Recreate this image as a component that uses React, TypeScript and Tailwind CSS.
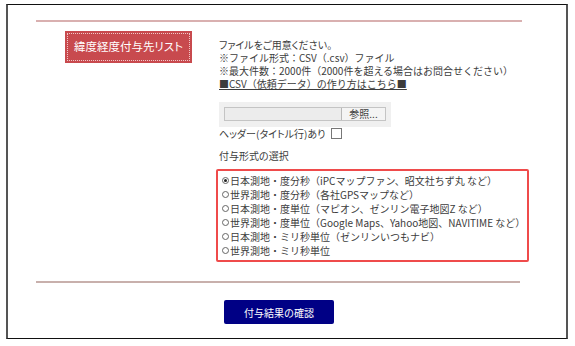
const options = [
  "日本測地・度分秒（iPCマップファン、昭文社ちず丸 など）",
  "世界測地・度分秒（各社GPSマップなど）",
  "日本測地・度単位（マピオン、ゼンリン電子地図Z など）",
  "世界測地・度単位（Google Maps、Yahoo地図、NAVITIME など）",
  "日本測地・ミリ秒単位（ゼンリンいつもナビ）",
  "世界測地・ミリ秒単位",
];

function Radio({ checked }: { checked?: boolean }) {
  return (
    <span className="w-[7px] h-[7px] rounded-full border border-[#666] bg-white flex items-center justify-center shrink-0">
      {checked && <span className="w-[3px] h-[3px] rounded-full bg-[#222]" />}
    </span>
  );
}

export default function App() {
  return (
    <div className="w-[575px] h-[346px] bg-white pt-[4px] pl-[6px] text-[#3c3c3c] font-['Noto_Sans_CJK_JP','Noto_Sans',sans-serif]">
      <div className="w-[562px] h-[335px] border-y border-x-2 border-y-[#111] border-x-[#555] flex flex-col">
        <div className="mt-[15px] ml-[28px] w-[486px] h-[2px] bg-[#d9b0b0]" />

        <div className="flex mt-[9px]">
          <div className="ml-[57px] w-[127px] h-[32px] bg-[#c84a4e] p-[2px] shrink-0">
            <div className="w-full h-full border border-dotted border-[#f0c8c8] flex items-center justify-center text-white text-[11.5px] [font-feature-settings:'palt']">
              緯度経度付与先リスト
            </div>
          </div>

          <div className="ml-[27px] pt-[7px] flex flex-col text-[10px] leading-[13px]">
            <div className="[font-feature-settings:'palt']">ファイルをご用意ください。</div>
            <div>※ファイル形式：CSV（.csv）ファイル</div>
            <div>※最大件数：2000件（2000件を超える場合はお問合せください）</div>
            <div className="underline">■CSV（依頼データ）の作り方はこちら■</div>

            <div className="mt-[12px] w-[172px] h-[25px] bg-[#f0f0f0] p-[5px] pb-[6px]">
              <div className="w-full h-full border border-[#c4c4c4] bg-[#ececec] flex justify-end">
                <div className="w-[44px] h-full border-l border-[#b8b8b8] bg-[#f4f4f4] flex items-center justify-center text-[10px] leading-none">
                  参照...
                </div>
              </div>
            </div>

            <div className="flex items-center h-[13px]">
              <span className="[font-feature-settings:'palt']">ヘッダー(タイトル行)あり</span>
              <span className="ml-[6px] w-[11px] h-[11px] border border-[#777] bg-white" />
            </div>

            <div className="mt-[9px] [font-feature-settings:'palt']">付与形式の選択</div>

            <div className="mt-[7px] -ml-[3px] w-[313px] h-[93px] border-2 border-[#ef4b4b] rounded-[2px] pt-[2px] pl-[4px] flex flex-col">
              {options.map((o, i) => (
                <div key={i} className="flex items-center h-[14px]">
                  <Radio checked={i === 0} />
                  <span className="ml-[1px]">{o}</span>
                </div>
              ))}
            </div>
          </div>
        </div>

        <div className="mt-[19px] ml-[28px] w-[484px] h-[2px] bg-[#c8b0ac]" />

        <div className="mt-[17px] ml-[216px]">
          <button className="w-[110px] h-[24px] bg-[#000085] rounded-[2px] text-white text-[10px] flex items-center justify-center">
            付与結果の確認
          </button>
        </div>
      </div>
    </div>
  );
}
